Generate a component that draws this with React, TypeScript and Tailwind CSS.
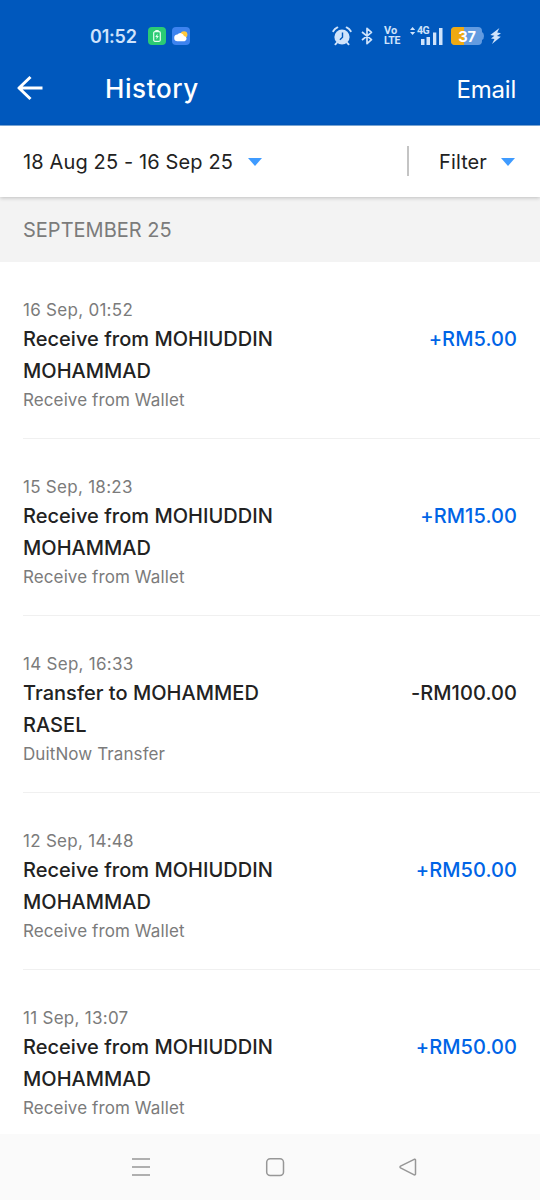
type Transaction = {
  date: string;
  title: string;
  type: string;
  amount: string;
};

const transactions: Transaction[] = [
  { date: '16 Sep, 01:52', title: 'Receive from MOHIUDDIN MOHAMMAD', type: 'Receive from Wallet', amount: '+RM5.00' },
  { date: '15 Sep, 18:23', title: 'Receive from MOHIUDDIN MOHAMMAD', type: 'Receive from Wallet', amount: '+RM15.00' },
  { date: '14 Sep, 16:33', title: 'Transfer to MOHAMMED RASEL', type: 'DuitNow Transfer', amount: '-RM100.00' },
  { date: '12 Sep, 14:48', title: 'Receive from MOHIUDDIN MOHAMMAD', type: 'Receive from Wallet', amount: '+RM50.00' },
  { date: '11 Sep, 13:07', title: 'Receive from MOHIUDDIN MOHAMMAD', type: 'Receive from Wallet', amount: '+RM50.00' },
];

function Caret() {
  return (
    <svg width="14" height="8" viewBox="0 0 14 8" className="shrink-0">
      <path d="M0 0h14L7 8z" fill="#3f9bff" />
    </svg>
  );
}

function StatusBar() {
  return (
    <div className="flex h-[72px] items-center pl-[90px] text-[#cfe3fb]">
      <span className="w-[58px] pt-px text-[18px] leading-6 font-semibold tracking-[-0.2px]">01:52</span>
      <svg width="18" height="18" viewBox="0 0 18 18" className="shrink-0">
        <rect width="18" height="18" rx="4" fill="#2bcb74" />
        <rect x="5.7" y="4.7" width="6.6" height="9.6" rx="1.2" fill="none" stroke="#e4fff0" strokeWidth="1.2" />
        <path d="M7.3 3.6h3.4" stroke="#e4fff0" strokeWidth="1.2" />
        <path d="M9.6 6.5 7.2 10h1.5l-.3 2.6L10.8 9H9.3z" fill="#e4fff0" />
      </svg>
      <svg width="18" height="18" viewBox="0 0 18 18" className="ml-[6px] shrink-0">
        <rect width="18" height="18" rx="4" fill="#3d83ef" />
        <circle cx="12" cy="7.6" r="3.4" fill="#ffc83d" />
        <path d="M5.6 14.2a3.3 3.3 0 0 1-.2-6.6 3.7 3.7 0 0 1 6.6 1.3 2.7 2.7 0 0 1 .6 5.3z" fill="#fff" />
      </svg>

      <svg width="20" height="20" viewBox="0 0 20 20" className="ml-[142px] shrink-0">
        <circle cx="10" cy="11" r="7.6" fill="currentColor" />
        <path d="M1.2 5.2Q2.6 2.6 5.4 1.4M18.8 5.2Q17.4 2.6 14.6 1.4M4.8 16.8l-1.4 1.6M15.2 16.8l1.4 1.6" fill="none" stroke="currentColor" strokeWidth="1.8" strokeLinecap="round" />
        <path d="M10.5 6.6v4.7l-2.6 2.5" fill="none" stroke="#0058bd" strokeWidth="1.4" />
      </svg>
      <svg width="12" height="18" viewBox="0 0 12 18" className="ml-[9px] shrink-0">
        <path d="m1 5 9.5 7.7L6 16.7V1.3l4.5 4L1 13" fill="none" stroke="currentColor" strokeWidth="1.7" strokeLinejoin="round" />
      </svg>
      <span className="ml-[11px] flex w-[18px] flex-col font-['Roboto','Liberation_Sans',sans-serif] text-[10.5px] leading-[10px] font-bold">
        <span className="text-[11px]">Vo</span>
        <span className="text-[10.5px] tracking-[-0.3px]">LTE</span>
      </span>
      <span className="relative ml-[8px] h-[20px] w-[33px]">
        <svg width="33" height="20" viewBox="0 0 33 20" className="absolute inset-0">
          <path d="M0 4 2.6 1l2.6 3zM0 6h5.2L2.6 9zM11 13h3.5v6H11zM16.5 11H20v8h-3.5zM23 6.5h3.3V19H23zM29 2h3.5v17H29z" fill="currentColor" />
        </svg>
        <span className="absolute top-0 left-[7px] font-['Roboto','Liberation_Sans',sans-serif] text-[10.5px] leading-[10px] font-bold tracking-[-0.5px]">4G</span>
      </span>
      <span className="relative ml-[8px] flex h-[18px] w-[33px] items-center">
        <svg width="33" height="18" viewBox="0 0 33 18" className="absolute inset-0">
          <path d="M4 0h23q4 0 4 4v1q2 1 2 4t-2 4v1q0 4-4 4H4q-4 0-4-4V4q0-4 4-4z" fill="#639be0" />
          <path d="M13 0H4Q0 0 0 4v10q0 4 4 4h9z" fill="#efa912" />
        </svg>
        <span className="relative w-[32px] pt-px text-center text-[14.5px] leading-4 font-bold tracking-[-0.2px] text-white">37</span>
      </span>
      <svg width="13" height="18" viewBox="0 0 13 18" className="ml-[5px] shrink-0">
        <path d="M10.4 1 1.3 8.1l4.1.7L2 11.5l3.5.6L3 17l8.8-7.2-3.9-.8L12 6.2 8.2 5.6z" fill="currentColor" />
      </svg>
    </div>
  );
}

function TransactionRow({ item, last }: { item: Transaction; last: boolean }) {
  return (
    <li className={`ml-[23px] flex h-[177px] shrink-0 justify-between pt-[35px] pr-[23px] ${last ? '' : 'border-b border-[#f0f0f0]'}`}>
      <div className="w-[265px]">
        <p className="text-[17px] leading-[26px] tracking-[0.28px] text-[#7b7b7b]">{item.date}</p>
        <p className="pt-px text-[20px] leading-[31.7px] font-medium tracking-[0.03px] text-[#222222]">{item.title}</p>
        <p className="text-[17px] leading-[26px] tracking-[0.1px] text-[#7b7b7b]">{item.type}</p>
      </div>
      <p className={`pt-[26px] text-[20px] leading-[33px] font-medium tracking-[0.08px] ${item.amount.startsWith('+') ? 'text-[#0064e6]' : 'text-[#222222]'}`}>
        {item.amount}
      </p>
    </li>
  );
}

export default function App() {
  return (
    <div className="flex h-[1200px] w-[540px] flex-col overflow-hidden bg-white font-['Inter','Liberation_Sans',sans-serif]">
      <header className="h-[126px] shrink-0 border-b border-[#7fadde] bg-[#0058bd] text-white">
        <StatusBar />
        <div className="flex h-8 items-center pr-6 pl-[17px]">
          <svg width="26" height="26" viewBox="0 0 26 26" className="shrink-0">
            <path d="M13.5 2 2 13l11.5 11M2.5 13H25.5" fill="none" stroke="currentColor" strokeWidth="3" strokeLinejoin="round" />
          </svg>
          <h1 className="mt-px ml-[62px] text-[26px] leading-8 font-medium tracking-[0.6px]">History</h1>
          <button className="mt-[3px] ml-auto text-[24px] leading-8 tracking-[-0.2px]">Email</button>
        </div>
      </header>

      <div className="relative flex h-[71px] shrink-0 items-center bg-white pr-[25px] pl-[23px] text-[20px] text-[#222222] shadow-[0_1px_4px_rgba(0,0,0,0.22)]">
        <button className="flex items-center gap-[15px] tracking-[0.13px]">
          18 Aug 25 - 16 Sep 25
          <Caret />
        </button>
        <div className="mb-px ml-auto h-[30px] w-[2px] bg-[#c4c4c4]" />
        <button className="ml-[30px] flex items-center gap-[14px] tracking-[0.1px]">
          Filter
          <Caret />
        </button>
      </div>

      <h2 className="flex h-[65px] shrink-0 items-center bg-[#f3f3f3] pl-[23px] text-[20px] text-[#7b7b7b]">SEPTEMBER 25</h2>

      <ul className="flex min-h-0 flex-1 flex-col overflow-hidden">
        {transactions.map((item, index) => (
          <TransactionRow key={item.date} item={item} last={index === transactions.length - 1} />
        ))}
      </ul>

      <nav className="flex h-[66px] shrink-0 items-center justify-between bg-[#fafafa] pr-[122px] pl-[131px] text-[#979797]">
        <svg width="20" height="20" viewBox="0 0 20 20">
          <path d="M1 2h18M1 10h18M1 18h18" stroke="currentColor" strokeWidth="1.5" />
        </svg>
        <svg width="20" height="20" viewBox="0 0 20 20">
          <rect x="1.7" y="1.7" width="16.8" height="16.8" rx="3.5" fill="none" stroke="currentColor" strokeWidth="1.5" />
        </svg>
        <svg width="20" height="20" viewBox="0 0 20 20">
          <path d="M16.2 2.3 2.5 9.2q-1 .8 0 1.6l13.7 7q1.3.4 1.3-1V3.3q0-1.4-1.3-1z" fill="none" stroke="currentColor" strokeWidth="1.5" strokeLinejoin="round" />
        </svg>
      </nav>
    </div>
  );
}
